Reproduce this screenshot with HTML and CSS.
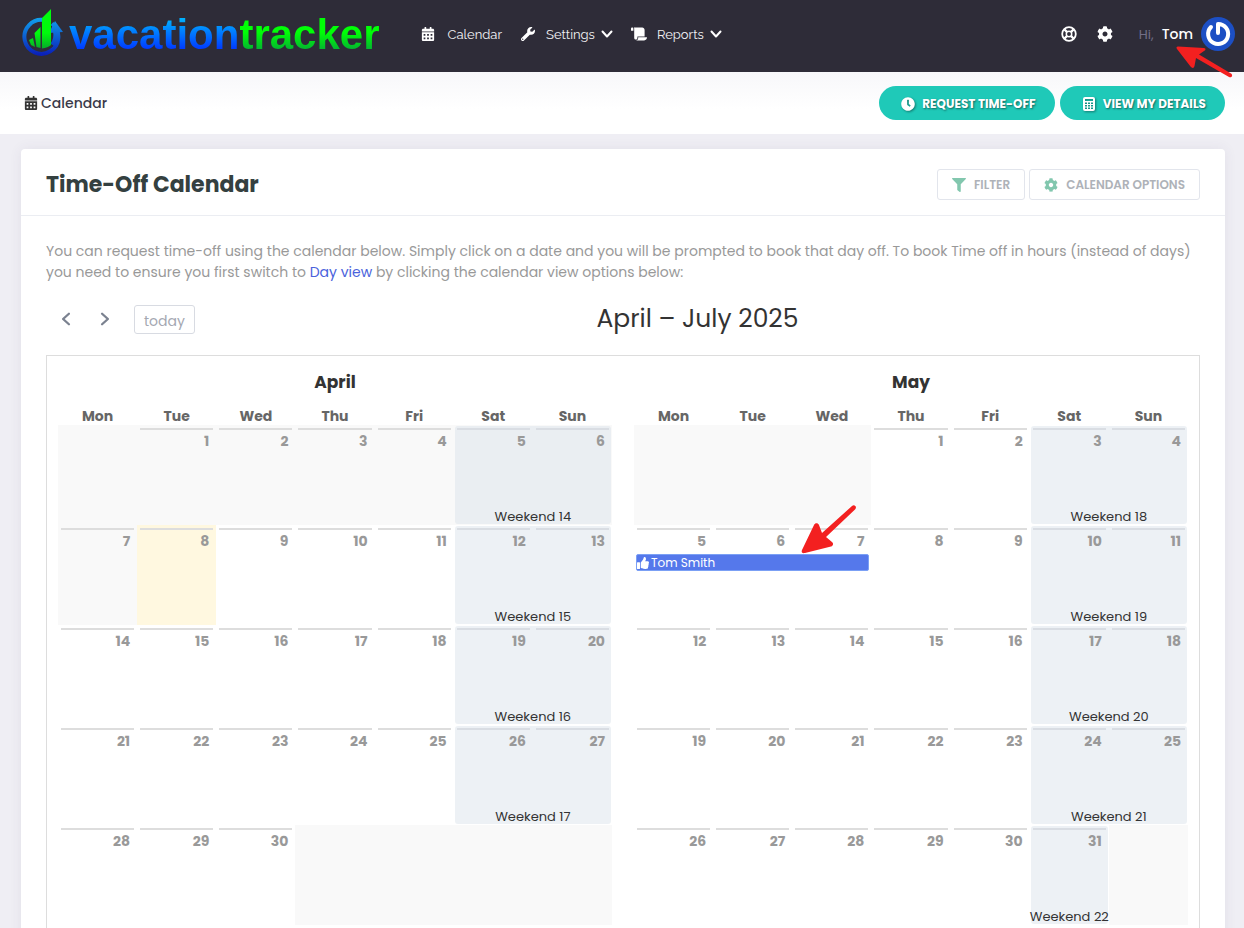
FILE: index.html
```
<!DOCTYPE html>
<html lang="en">
<head>
    <meta charset="UTF-8">
    <meta name="viewport" content="width=device-width, initial-scale=1.0">
    <title>Vacation Tracker - Calendar</title>
    <link rel="stylesheet" href="styles.css">
</head>
<body>
    <!-- Icon set -->
    <svg class="sprite" aria-hidden="true">
        <symbol id="calendar" viewBox="0 0 448 512">
            <path fill-rule="evenodd" d="M0 464c0 26.500 21.500 48 48 48h352c26.500 0 48-21.500 48-48V192H0zM64 256h64v64H64zM192 256h64v64h-64zM320 256h64v64h-64zM64 384h64v64H64zM192 384h64v64h-64zM320 384h64v64h-64zM400 64h-48V16c0-9-7-16-16-16h-32c-9 0-16 7-16 16v48H160V16c0-9-7-16-16-16h-32c-9 0-16 7-16 16v48H48C21 64 0 85 0 112v48h448v-48c0-27-21-48-48-48z"/>
        </symbol>
        <symbol id="wrench" viewBox="0 0 512 512">
            <path d="M507.730 109.100c-2.240-9.030-13.540-12.090-20.120-5.510l-74.360 74.360-67.880-11.310-11.310-67.880 74.360-74.360c6.620-6.620 3.430-17.900-5.660-20.160-47.380-11.740-99.550.91-136.580 37.930-39.640 39.640-50.550 97.100-34.050 147.200L18.740 402.760c-24.990 24.990-24.990 65.510 0 90.500 24.990 24.990 65.510 24.990 90.500 0l213.210-213.210c50.120 16.710 107.470 5.680 147.370-34.220 37.070-37.070 49.700-89.320 37.910-136.730zM64 472c-13.250 0-24-10.750-24-24 0-13.260 10.750-24 24-24s24 10.740 24 24c0 13.250-10.750 24-24 24z"/>
        </symbol>
        <symbol id="scroll" viewBox="0 0 640 512">
            <path d="M48 0C21.530 0 0 21.530 0 48v64c0 8.840 7.160 16 16 16h80V48C96 21.530 74.470 0 48 0zm208 412.570V352h288V96c0-52.940-43.060-96-96-96H111.590C121.740 13.410 128 29.920 128 48v368c0 38.870 34.650 69.650 74.750 63.120C234.220 474 256 444.460 256 412.570zM288 384v32c0 52.930-43.060 96-96 96h336c61.860 0 112-50.140 112-112 0-8.840-7.160-16-16-16H288z"/>
        </symbol>
        <symbol id="cog" viewBox="0 0 512 512">
            <path d="M487.400 315.700l-42.600-24.600c4.300-23.200 4.300-47 0-70.200l42.600-24.600c4.900-2.800 7.100-8.600 5.500-14-11.100-35.600-30-67.800-54.700-94.600-3.800-4.100-10-5.100-14.800-2.300L380.800 110c-17.900-15.400-38.500-27.300-60.800-35.100V25.800c0-5.600-3.900-10.500-9.400-11.700-36.700-8.200-74.300-7.800-109.200 0-5.500 1.200-9.400 6.100-9.400 11.700V75c-22.200 7.900-42.800 19.800-60.800 35.100L88.700 85.500c-4.900-2.800-11-1.900-14.800 2.300-24.700 26.700-43.600 58.900-54.700 94.600-1.700 5.400.6 11.200 5.500 14L67.300 221c-4.300 23.200-4.300 47 0 70.200l-42.600 24.600c-4.900 2.800-7.100 8.600-5.500 14 11.100 35.600 30 67.800 54.700 94.600 3.800 4.100 10 5.100 14.800 2.300l42.600-24.600c17.900 15.400 38.500 27.300 60.800 35.100v49.200c0 5.600 3.900 10.500 9.400 11.700 36.700 8.200 74.300 7.800 109.200 0 5.500-1.200 9.400-6.100 9.400-11.700v-49.200c22.200-7.900 42.800-19.800 60.800-35.100l42.600 24.600c4.900 2.800 11 1.900 14.800-2.300 24.700-26.700 43.600-58.900 54.700-94.600 1.500-5.500-.7-11.300-5.600-14.100zM256 336c-44.100 0-80-35.900-80-80s35.900-80 80-80 80 35.900 80 80-35.900 80-80 80z"/>
        </symbol>
        <symbol id="filter" viewBox="0 0 512 512">
            <path d="M487.976 0H24.028C2.710 0-8.047 25.866 7.058 40.971L192 225.941V432c0 7.831 3.821 15.170 10.237 19.662l80 55.980C298.020 518.690 320 507.493 320 487.980V225.941l184.947-184.970C520.021 25.896 509.338 0 487.976 0z"/>
        </symbol>
        <symbol id="clock" viewBox="0 0 512 512">
            <path d="M256 8C119 8 8 119 8 256s111 248 248 248 248-111 248-248S393 8 256 8zm92 313l-20 25a16 16 0 0 1-22 3l-67-50a40 40 0 0 1-15-31V112a16 16 0 0 1 16-16h32a16 16 0 0 1 16 16v144l58 42a16 16 0 0 1 2 23z"/>
        </symbol>
        <symbol id="calculator" viewBox="0 0 12 14">
            <path fill-rule="evenodd" d="M2 0h8a2 2 0 0 1 2 2v10a2 2 0 0 1-2 2H2a2 2 0 0 1-2-2V2a2 2 0 0 1 2-2zM2 2v2h8V2zM2 5.500v1.500h2V5.500zM5 5.500v1.500h2V5.500zM8 5.500v1.500h2V5.500zM2 8v1.500h2V8zM5 8v1.500h2V8zM8 8v1.500h2V8zM2 10.500V12h2v-1.500zM5 10.500V12h2v-1.500zM8 10.500V12h2v-1.500z"/>
        </symbol>
        <symbol id="thumb" viewBox="0 0 512 512">
            <path d="M104 224H24c-13.255 0-24 10.745-24 24v240c0 13.255 10.745 24 24 24h80c13.255 0 24-10.745 24-24V248c0-13.255-10.745-24-24-24zM384 81.452c0 42.416-25.970 66.208-33.277 94.548h101.723c33.397 0 59.397 27.746 59.553 58.098.084 17.938-7.546 37.249-19.439 49.197l-.11.11c9.836 23.337 8.237 56.037-9.308 79.469 8.681 25.895-.069 57.704-16.382 74.757 4.298 17.598 2.244 32.575-6.148 44.632C440.202 511.587 389.616 512 346.839 512l-2.845-.001c-48.287-.017-87.806-17.598-119.560-31.725-15.957-7.099-36.821-15.887-52.651-16.178-6.540-.12-11.783-5.457-11.783-11.998v-213.770c0-3.200 1.282-6.271 3.558-8.521 39.614-39.144 56.648-80.587 89.117-113.111 14.804-14.832 20.188-37.236 25.393-58.902C282.515 39.293 291.817 0 312 0c24 0 72 8 72 81.452z"/>
        </symbol>
        <symbol id="life-ring" viewBox="0 0 16 16">
            <g fill="none" stroke="currentColor">
                <circle cx="8" cy="8" r="6.800" stroke-width="1.800"/>
                <circle cx="8" cy="8" r="2.700" stroke-width="1.500"/>
                <path stroke-width="2.400" d="M3.500 3.500l2.600 2.600M12.500 3.500L9.900 6.100M3.500 12.500l2.600-2.600M12.500 12.500L9.900 9.900"/>
            </g>
        </symbol>
        <symbol id="chevron" viewBox="0 0 12 12">
            <path fill="none" stroke="currentColor" stroke-linecap="round" stroke-linejoin="round" d="M1.500 3.500L6 8.500l4.500-5"/>
        </symbol>
    </svg>

    <header class="header">
        <a class="logo" href="#" aria-label="vacationtracker">
            <svg class="logo-mark" viewBox="0 0 42 48">
                <defs>
                    <linearGradient id="ring" gradientUnits="userSpaceOnUse" x1="0" y1="8" x2="0" y2="46">
                        <stop offset="0" stop-color="#10a4ee"/>
                        <stop offset="1" stop-color="#0a1fb8"/>
                    </linearGradient>
                    <linearGradient id="bars" gradientUnits="userSpaceOnUse" x1="0" y1="0" x2="0" y2="40">
                        <stop offset="0.600" stop-color="#00fb0c"/>
                        <stop offset="1" stop-color="#06a82c"/>
                    </linearGradient>
                </defs>
                <path fill="none" stroke="url(#ring)" stroke-width="4" d="M31 14.500A17 17 0 1 1 23 11"/>
                <path fill="none" stroke="url(#ring)" stroke-width="5" d="M34.500 22c1 5 0 10-3 14"/>
                <path fill="url(#ring)" d="M34 12l8 11-14 1z"/>
                <path fill="url(#bars)" d="M8 31l4-2 2 9-4-2zM13.500 24l6-6v21l-4-1zM21 9l9-9v36c-2 2-5 3-9 3.500z"/>
            </svg>
            <span class="logo-text"><span class="logo-blue">vacation</span><span class="logo-green">tracker</span></span>
        </a>
        <nav class="menu">
            <a class="menu-link" href="#"><svg class="icon menu-icon"><use href="#calendar"/></svg>Calendar</a>
            <a class="menu-link" href="#"><svg class="icon menu-icon"><use href="#wrench"/></svg>Settings<svg class="chevron"><use href="#chevron"/></svg></a>
            <a class="menu-link" href="#"><svg class="icon menu-icon"><use href="#scroll"/></svg>Reports<svg class="chevron"><use href="#chevron"/></svg></a>
        </nav>
        <div class="topbar">
            <a class="topbar-icon" href="#" aria-label="Help"><svg class="icon"><use href="#life-ring"/></svg></a>
            <a class="topbar-icon" href="#" aria-label="Options"><svg class="icon"><use href="#cog"/></svg></a>
            <a class="user" href="#">
                <span class="user-hi">Hi,</span>
                <span class="user-name">Tom</span>
                <svg class="avatar" viewBox="0 0 34 34">
                    <circle cx="17" cy="17" r="17" fill="#1c4fc4"/>
                    <path fill="none" stroke="#fff" stroke-width="4" stroke-linecap="round" stroke-linejoin="round" d="M17 16V7a10 10 0 1 1-7 3"/>
                </svg>
            </a>
            <svg class="arrow arrow-user" viewBox="0 0 58 34" aria-hidden="true">
                <path d="M2 1.500L28 3c2 .5 2 2 0 3L23 9.500 55 28.500c2.500 1.500.5 5-2 3.500L20 13l-1.500 8c-.5 2.500-2.500 2.500-4 .5L1 4C0 2.500.5 1.500 2 1.500z"/>
            </svg>
        </div>
    </header>

    <div class="subheader">
        <h3 class="subheader-title"><svg class="icon"><use href="#calendar"/></svg>Calendar</h3>
        <div class="subheader-actions">
            <button type="button" class="btn-pill"><svg class="icon"><use href="#clock"/></svg>Request Time-Off</button>
            <button type="button" class="btn-pill"><svg class="icon"><use href="#calculator"/></svg>View My Details</button>
        </div>
    </div>

    <main class="card">
        <div class="card-head">
            <h1>Time-Off Calendar</h1>
            <div class="card-tools">
                <button type="button" class="btn-outline"><svg class="icon"><use href="#filter"/></svg>Filter</button>
                <button type="button" class="btn-outline"><svg class="icon"><use href="#cog"/></svg>Calendar Options</button>
            </div>
        </div>
        <div class="card-body">
            <p class="intro">You can request time-off using the calendar below. Simply click on a date and you will be prompted to book that day off. To book Time off in hours (instead of days) you need to ensure you first switch to <a href="#">Day view</a> by clicking the calendar view options below:</p>

            <div class="toolbar">
                <div class="toolbar-nav">
                    <button type="button" class="nav-btn prev" aria-label="Previous"><svg><use href="#chevron"/></svg></button>
                    <button type="button" class="nav-btn next" aria-label="Next"><svg><use href="#chevron"/></svg></button>
                    <button type="button" class="today-btn">today</button>
                </div>
                <h2>April – July 2025</h2>
                <div></div>
            </div>

            <div class="months">
                <table class="month">
                    <caption>April</caption>
                    <thead>
                        <tr><th>Mon</th><th>Tue</th><th>Wed</th><th>Thu</th><th>Fri</th><th>Sat</th><th>Sun</th></tr>
                    </thead>
                    <tbody>
                        <tr><td class="off"></td><td class="past"><b>1</b></td><td class="past"><b>2</b></td><td class="past"><b>3</b></td><td class="past"><b>4</b></td><td class="past"><b>5</b><div class="weekend">Weekend 14</div></td><td class="past"><b>6</b></td></tr>
                        <tr><td class="past"><b>7</b></td><td class="today"><b>8</b></td><td><b>9</b></td><td><b>10</b></td><td><b>11</b></td><td><b>12</b><div class="weekend">Weekend 15</div></td><td><b>13</b></td></tr>
                        <tr><td><b>14</b></td><td><b>15</b></td><td><b>16</b></td><td><b>17</b></td><td><b>18</b></td><td><b>19</b><div class="weekend">Weekend 16</div></td><td><b>20</b></td></tr>
                        <tr><td><b>21</b></td><td><b>22</b></td><td><b>23</b></td><td><b>24</b></td><td><b>25</b></td><td><b>26</b><div class="weekend">Weekend 17</div></td><td><b>27</b></td></tr>
                        <tr><td><b>28</b></td><td><b>29</b></td><td><b>30</b></td><td class="off"></td><td class="off"></td><td class="off"></td><td class="off"></td></tr>
                    </tbody>
                </table>
                <table class="month">
                    <caption>May</caption>
                    <thead>
                        <tr><th>Mon</th><th>Tue</th><th>Wed</th><th>Thu</th><th>Fri</th><th>Sat</th><th>Sun</th></tr>
                    </thead>
                    <tbody>
                        <tr><td class="off"></td><td class="off"></td><td class="off"></td><td><b>1</b></td><td><b>2</b></td><td><b>3</b><div class="weekend">Weekend 18</div></td><td><b>4</b></td></tr>
                        <tr>
                            <td><b>5</b><a class="event" href="#"><svg class="icon"><use href="#thumb"/></svg>Tom Smith</a></td>
                            <td><b>6</b></td>
                            <td>
                                <b>7</b>
                                <svg class="arrow arrow-event" viewBox="0 0 56 50" aria-hidden="true">
                                    <path d="M1 45L13 20c1-2.500 4-2.500 5 0L21 28 51 1c2.500-2 5.500 1 3 3.500L25 32l6 5c2 1.500 1 4-1 4.500L4 48c-2.500.5-4-.5-3-3z"/>
                                </svg>
                            </td>
                            <td><b>8</b></td><td><b>9</b></td><td><b>10</b><div class="weekend">Weekend 19</div></td><td><b>11</b></td>
                        </tr>
                        <tr><td><b>12</b></td><td><b>13</b></td><td><b>14</b></td><td><b>15</b></td><td><b>16</b></td><td><b>17</b><div class="weekend">Weekend 20</div></td><td><b>18</b></td></tr>
                        <tr><td><b>19</b></td><td><b>20</b></td><td><b>21</b></td><td><b>22</b></td><td><b>23</b></td><td><b>24</b><div class="weekend">Weekend 21</div></td><td><b>25</b></td></tr>
                        <tr><td><b>26</b></td><td><b>27</b></td><td><b>28</b></td><td><b>29</b></td><td><b>30</b></td><td><b>31</b><div class="weekend single">Weekend 22</div></td><td class="off"></td></tr>
                    </tbody>
                </table>
            </div>
        </div>
    </main>
</body>
</html>
```
FILE: styles.css
```
* {
    margin: 0;
    padding: 0;
    box-sizing: border-box;
}

body {
    background: #efeef4;
    color: #333;
    font-family: Poppins, Inter, sans-serif;
    font-size: 14px;
    line-height: 21px;
}

a {
    text-decoration: none;
}

button {
    font-family: inherit;
    cursor: pointer;
}

.sprite {
    position: absolute;
    width: 0;
    height: 0;
}

.icon {
    width: 14px;
    height: 14px;
    fill: currentColor;
    flex: none;
}

/* Header */
.header {
    display: flex;
    align-items: center;
    height: 72px;
    padding: 0 9px 4px 21px;
    background: #2e2c38;
}

.logo {
    display: flex;
    align-items: center;
    gap: 6px;
    margin-right: 40px;
    padding-bottom: 2px;
}

.logo-mark {
    width: 42px;
    height: 48px;
}

.logo-text {
    padding-top: 3px;
    font-family: "Liberation Sans", Arial, sans-serif;
    font-size: 42px;
    font-weight: 700;
    line-height: 48px;
}

.logo-blue,
.logo-green {
    background: linear-gradient(to bottom, #00b4ff 15%, #003cff 80%);
    -webkit-background-clip: text;
    background-clip: text;
    color: transparent;
}

.logo-green {
    background-image: linear-gradient(to bottom, #00ff06 45%, #04ae34 85%);
}

.menu {
    display: flex;
    gap: 18px;
}

.menu-link {
    display: flex;
    align-items: center;
    color: #f2f2f5;
    font-family: Raleway, "Open Sans", sans-serif;
    font-size: 13px;
}

.menu-icon {
    width: 16px;
    margin-right: 10px;
    color: #fff;
}

.menu-link:first-child .menu-icon {
    margin-right: 12px;
}

.chevron {
    width: 12px;
    height: 12px;
    margin-left: 6px;
    color: #fff;
    stroke-width: 2;
}

.topbar {
    position: relative;
    display: flex;
    align-items: center;
    gap: 20px;
    margin-left: auto;
}

.topbar-icon {
    display: flex;
    color: #fff;
}

.topbar-icon .icon {
    width: 16px;
    height: 16px;
}

.user {
    display: flex;
    align-items: center;
    gap: 8px;
    margin-left: 6px;
}

.user-hi {
    color: #736f87;
    font-size: 13px;
}

.user-name {
    color: #fff;
    font-weight: 500;
}

.avatar {
    width: 34px;
    height: 34px;
}

.arrow {
    position: absolute;
    z-index: 3;
    fill: #f32020;
}

.arrow-user {
    top: 28px;
    right: 1px;
    width: 58px;
    height: 34px;
}

/* Subheader */
.subheader {
    display: flex;
    align-items: center;
    justify-content: space-between;
    height: 62px;
    padding: 0 19px 0 24px;
    background: linear-gradient(to bottom, #f7f7fa, #fff 60%);
}

.subheader-title {
    display: flex;
    align-items: center;
    gap: 3px;
    color: #3b3a4a;
    font-size: 14px;
    font-weight: 500;
}

.subheader-title .icon {
    color: #333;
}

.subheader-actions {
    display: flex;
    gap: 5px;
}

.btn-pill {
    display: flex;
    align-items: center;
    gap: 7px;
    height: 34px;
    padding: 1px 19px 0 22px;
    border: 0;
    border-radius: 17px;
    background: #1fc9b8;
    color: #fff;
    font-size: 12px;
    font-weight: 700;
    text-transform: uppercase;
    text-shadow: 1px 1px 2px rgba(0, 0, 0, 0.5);
}

.btn-pill .icon {
    filter: drop-shadow(1px 1px 1px rgba(0, 0, 0, 0.4));
}

/* Card */
.card {
    margin: 15px 19px 20px 21px;
    border-radius: 4px;
    background: #fff;
    box-shadow: 0 0 13px rgba(82, 63, 105, 0.08);
}

.card-head {
    display: flex;
    align-items: center;
    justify-content: space-between;
    height: 67px;
    padding: 4px 25px 0;
    border-bottom: 1px solid #ebedf2;
}

.card-head h1 {
    padding-top: 2px;
    color: #344040;
    font-size: 22px;
    font-weight: 700;
    line-height: 30px;
}

.card-tools {
    display: flex;
    gap: 4px;
}

.btn-outline {
    display: flex;
    align-items: center;
    gap: 8px;
    height: 31px;
    padding: 1px 14px 0;
    border: 1px solid #e2e5ec;
    border-radius: 3px;
    background: #fff;
    color: #aeb2b8;
    font-size: 12px;
    font-weight: 600;
    text-transform: uppercase;
}

.btn-outline .icon {
    color: #82c7ae;
}

.card-body {
    padding: 25px 25px 30px;
}

.intro {
    color: #999;
}

.intro a {
    color: #4a62dc;
}

.toolbar {
    display: flex;
    align-items: center;
    justify-content: space-between;
    margin: 20px 0;
}

.toolbar-nav {
    display: flex;
    align-items: center;
}

.nav-btn {
    display: flex;
    align-items: center;
    justify-content: center;
    width: 38px;
    height: 30px;
    border: 0;
    background: none;
    color: #7b8290;
}

.nav-btn svg {
    width: 14px;
    height: 14px;
    stroke-width: 2;
}

.prev svg {
    transform: rotate(90deg);
}

.next svg {
    transform: rotate(-90deg);
}

.prev {
    width: 40px;
}

.today-btn {
    height: 29px;
    margin-left: 10px;
    padding: 5px 9px 0;
    border: 1px solid #d8dbe2;
    border-radius: 3px;
    background: #fff;
    color: #a5a8b2;
    font-size: 14px;
    line-height: 21px;
}

.toolbar h2 {
    font-size: 25px;
    font-weight: 400;
    line-height: 32px;
}

/* Months */
.months {
    display: grid;
    grid-template-columns: 1fr 1fr;
    gap: 22px;
    padding: 11px;
    border: 1px solid #ddd;
}

.month {
    width: 100%;
    table-layout: fixed;
    border-collapse: collapse;
}

.month caption {
    height: 40px;
    padding-top: 3px;
    font-size: 17px;
    font-weight: 700;
    line-height: 24px;
}

.month th {
    height: 18px;
    color: #666;
    font-size: 14px;
    font-weight: 700;
    line-height: 18px;
}

.month td {
    position: relative;
    height: 100px;
    padding: 3px;
    vertical-align: top;
}

.month td b {
    position: relative;
    z-index: 2;
    display: block;
    padding: 0 4px;
    border-top: 2px solid #ddd;
    color: #999;
    font-weight: 700;
    line-height: 23px;
    text-align: right;
}

.month td:nth-child(n+6) b {
    border-color: #d9dde3;
}

.month .past,
.month .off {
    background: #f9f9f9;
}

.month .today {
    background: #fff8e0;
}

.weekend {
    position: absolute;
    top: 1px;
    left: 1px;
    z-index: 1;
    display: flex;
    align-items: flex-end;
    justify-content: center;
    width: calc(200% - 2px);
    height: 98px;
    border-radius: 3px;
    background: rgba(215, 223, 233, 0.45);
    color: #333;
    font-size: 13px;
    line-height: 15px;
    white-space: nowrap;
}

.weekend.single {
    width: calc(100% - 2px);
}

.event {
    position: absolute;
    top: 29px;
    left: 2px;
    z-index: 2;
    display: flex;
    align-items: center;
    gap: 2px;
    width: calc(300% - 4px);
    height: 17px;
    border: 1px solid #7ba0f5;
    border-radius: 2px;
    background: #5578eb;
    color: #fff;
    font-size: 12px;
}

.event .icon {
    width: 12px;
    height: 12px;
}

.arrow-event {
    top: -20px;
    left: 9px;
    width: 56px;
    height: 50px;
}
```
